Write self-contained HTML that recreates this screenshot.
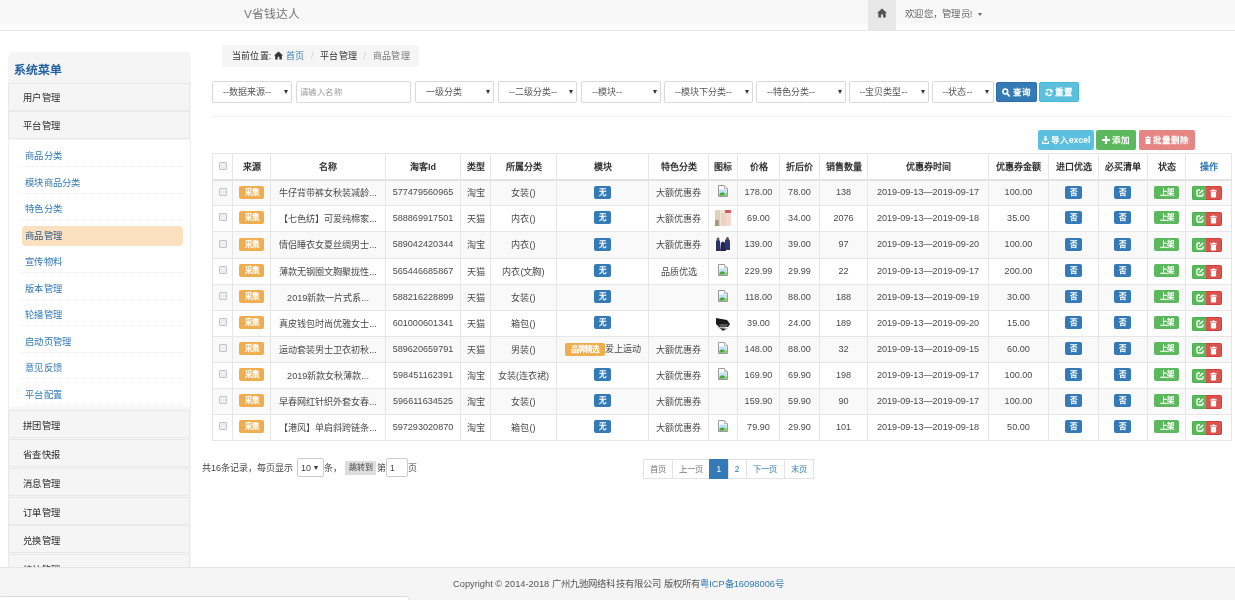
<!DOCTYPE html>
<html lang="zh-CN"><head><meta charset="utf-8">
<style>
*{box-sizing:border-box;margin:0;padding:0}
html,body{width:1235px;height:600px;overflow:hidden;background:#fff;}
#wrap{position:absolute;left:0;top:0;width:1235px;height:600px;will-change:transform;font-family:"Liberation Sans",sans-serif;color:#333}
.abs{position:absolute}
#hdr{left:0;top:0;width:1235px;height:31px;background:linear-gradient(#f8f8f8 0,#f8f8f8 24px,#fbfbfb 24px);border-bottom:1px solid #e7e7e7}
#brand{left:244px;top:5px;font-size:11.8px;color:#777;line-height:18px;white-space:nowrap}
#homebtn{left:868px;top:0;width:28px;height:30px;background:#e7e7e7}
#welcome{left:905px;top:7px;font-size:9.4px;letter-spacing:0.25px;color:#666;line-height:14px;white-space:nowrap}
.caret{display:inline-block;width:0;height:0;border-left:2.7px solid transparent;border-right:2.7px solid transparent;border-top:3.2px solid #666;vertical-align:middle;margin-left:5.5px}

#side{left:8px;top:52px;width:183px;height:560px;background:#f5f5f5;border-radius:5px}
#sidetitle{left:14px;top:63px;font-size:11.8px;font-weight:bold;color:#23629f;line-height:14px;white-space:nowrap}
.sitem{position:absolute;left:8px;width:182px;height:28px;background:#f5f5f5;border:1px solid #e8e8e8;font-size:9.3px;line-height:28px;padding-left:14px;color:#2a2a2a;letter-spacing:0.25px;white-space:nowrap}
#submenu{left:8px;top:140px;width:183px;height:267px;background:#fff;border-left:1px solid #eee;border-right:1px solid #eee}
.sub{position:absolute;left:20px;width:163px;height:24px;font-size:9.3px;letter-spacing:0.3px;line-height:26px;padding-left:5px;color:#337ab7;border-bottom:1px dotted #ececec;white-space:nowrap}
.sub.act{background:#fde0bf;color:#2a5a8c;border-radius:4px;left:22px;width:161px;height:20px;line-height:20px;padding-left:3px;border:none}

#crumb{left:222px;top:45px;width:197px;height:22px;background:#f5f5f5;border-radius:3px;font-size:9px;letter-spacing:0.2px;line-height:22px;padding-left:10px;white-space:nowrap;color:#333}
#crumb .sep{color:#ccc;padding:0 6.6px}
#crumb a{color:#337ab7}

.sel{position:absolute;top:81px;height:22px;border:1px solid #d9d9d9;border-radius:2px;background:#fff;font-size:9px;line-height:21px;padding-left:10px;color:#555;white-space:nowrap}
.sel .arr{position:absolute;right:3.5px;top:8px;width:0;height:0;border-left:2.5px solid transparent;border-right:2.5px solid transparent;border-top:4px solid #333}
.btn{position:absolute;border-radius:2px;color:#fff;font-size:8.5px;white-space:nowrap;display:flex;align-items:center;justify-content:center}
.bi{display:flex;align-items:center;gap:2.5px}.bi b{font-weight:bold;line-height:10px}.bi svg{display:block}

#hr{left:212px;top:113px;width:1019px;height:4px;border-bottom:1px solid #f4f4f4}

table{position:absolute;left:212px;top:153px;border-collapse:collapse;table-layout:fixed;font-size:9px;color:#333}
td,th{border:1px solid #e6e6e6;text-align:center;white-space:nowrap;overflow:hidden;padding:0}
th{height:26px;border-bottom:2px solid #e3e3e3;font-weight:bold;color:#333;padding-top:1px}
td{height:26px;color:#4a4a4a;font-size:9.1px;padding-bottom:1.5px}
tr.odd td{background:#f9f9f9}
.cb{display:inline-block;width:8px;height:8px;border:1px solid #c4c4c4;border-radius:1px;background:#eee;vertical-align:middle;position:relative;top:-1px}
.lbl{display:inline-block;height:13px;line-height:13px;border-radius:2px;color:#fff;font-size:7.5px;font-weight:bold;vertical-align:middle}
.lw{background:#f0ad4e;width:25px}
.lb{background:#337ab7;width:17px}
.lf{background:#337ab7;width:17px;position:relative;left:-0.5px}
.lg{background:#5cb85c;width:25px}
.ops{display:inline-block;height:14px;vertical-align:middle;font-size:0;position:relative;left:-1.5px;top:0.8px}
.ops>span{display:inline-block;height:14px;vertical-align:top}

.pt{font-size:9px;line-height:14px;white-space:nowrap;color:#444}
#pager{left:642.5px;top:458.5px;width:171px;height:20px}
#pager span{position:absolute;top:0;height:20px;line-height:18px;border:1px solid #e3e3e3;font-size:8.4px;color:#337ab7;text-align:center;background:#fff;white-space:nowrap}

#footer{left:0;top:567px;width:1235px;height:34px;background:#f5f5f5;border-top:1px solid #e5e5e5;font-size:9.3px;color:#555;white-space:nowrap}
#bottombox{left:-2px;top:596px;width:412px;height:10px;background:#fff;border:1px solid #ddd;border-radius:4px}
</style></head>
<body><div id="wrap">
<div id="hdr" class="abs"></div>
<div id="brand" class="abs">V省钱达人</div>
<div id="homebtn" class="abs"></div><svg width="10" height="10" viewBox="0 0 10 10" style="position:absolute;left:877px;top:8px"><path d="M5 0.5 L0 5 L1.3 5 L1.3 9.5 L4 9.5 L4 6.5 L6 6.5 L6 9.5 L8.7 9.5 L8.7 5 L10 5 Z" fill="#555"/></svg>
<div id="welcome" class="abs">欢迎您，管理员!<span class="caret"></span></div>

<div id="side" class="abs"></div>
<div id="sidetitle" class="abs">系统菜单</div>
<div class="sitem" style="top:83px">用户管理</div>
<div class="sitem" style="top:111px">平台管理</div>
<div id="submenu" class="abs"></div>
<div class="sub" style="top:143.0px">商品分类</div>
<div class="sub" style="top:169.6px">模块商品分类</div>
<div class="sub" style="top:196.1px">特色分类</div>
<div class="sub act" style="top:225.7px">商品管理</div>
<div class="sub" style="top:249.2px">宣传物料</div>
<div class="sub" style="top:275.8px">版本管理</div>
<div class="sub" style="top:302.3px">轮播管理</div>
<div class="sub" style="top:328.9px">启动页管理</div>
<div class="sub" style="top:355.4px">意见反馈</div>
<div class="sub" style="top:382.0px">平台配置</div>
<div class="sitem" style="top:410.2px;line-height:30px">拼团管理</div>
<div class="sitem" style="top:439.0px;line-height:30px">省查快报</div>
<div class="sitem" style="top:467.8px;line-height:30px">消息管理</div>
<div class="sitem" style="top:496.6px;line-height:30px">订单管理</div>
<div class="sitem" style="top:525.4px;line-height:30px">兑换管理</div>
<div class="sitem" style="top:554.2px;line-height:30px">统计管理</div>

<div id="crumb" class="abs">当前位置: <svg width="9" height="9" viewBox="0 0 10 10" style="vertical-align:-1px"><path d="M5 0.5 L0 5 L1.3 5 L1.3 9.5 L4 9.5 L4 6.5 L6 6.5 L6 9.5 L8.7 9.5 L8.7 5 L10 5 Z" fill="#333"/></svg> <a>首页</a><span class="sep">/</span>平台管理<span class="sep">/</span><span style="color:#777">商品管理</span></div>

<div id="hr" class="abs"></div>
<div class="sel" style="left:212px;width:80px">--数据来源--<i class="arr"></i></div>
<div class="sel" style="left:415px;width:79px">一级分类<i class="arr"></i></div>
<div class="sel" style="left:498px;width:79px">--二级分类--<i class="arr"></i></div>
<div class="sel" style="left:581px;width:80px">--模块--<i class="arr"></i></div>
<div class="sel" style="left:664px;width:89px">--模块下分类--<i class="arr"></i></div>
<div class="sel" style="left:756px;width:90px">--特色分类--<i class="arr"></i></div>
<div class="sel" style="left:848.5px;width:80.5px">--宝贝类型--<i class="arr"></i></div>
<div class="sel" style="left:931.5px;width:62px">--状态--<i class="arr"></i></div>
<div class="sel" style="left:296px;width:115px;color:#999;padding-left:2.5px;font-size:8.4px;letter-spacing:0.5px">请输入名称</div>
<div class="btn" style="left:996px;top:82px;width:41px;height:20px;background:#337ab7;border:1px solid #2e6da4"><span class="bi"><svg width="8" height="9" viewBox="0 0 8 9"><circle cx="3.3" cy="3.5" r="2.4" fill="none" stroke="#fff" stroke-width="1.5"/><path d="M4.8 5.2 L7.2 7.8" stroke="#fff" stroke-width="1.8" stroke-linecap="round"/></svg><b>查询</b></span></div>
<div class="btn" style="left:1039px;top:82px;width:40px;height:20px;background:#5bc0de;border:1px solid #46b8da"><span class="bi"><svg width="8" height="9" viewBox="0 0 8 9"><path d="M6.6 3.6 A2.9 2.9 0 0 0 1.3 3.0" fill="none" stroke="#fff" stroke-width="1.5"/><path d="M1.4 5.4 A2.9 2.9 0 0 0 6.7 6.0" fill="none" stroke="#fff" stroke-width="1.5"/><path d="M7.6 1.2 L7.6 4.4 L4.6 4.4 Z" fill="#fff"/><path d="M0.4 7.8 L0.4 4.6 L3.4 4.6 Z" fill="#fff"/></svg><b>重置</b></span></div>
<div class="btn" style="left:1038px;top:130px;width:56px;height:20px;background:#5bc0de"><span class="bi"><svg width="7" height="8" viewBox="0 0 7 8"><path d="M2.5 0 L4.5 0 L4.5 3 L6 3 L3.5 5.3 L1 3 L2.5 3 Z" fill="#fff"/><path d="M0 5 L1 5 L1 6.8 L6 6.8 L6 5 L7 5 L7 8 L0 8 Z" fill="#fff"/></svg><b>导入excel</b></span></div>
<div class="btn" style="left:1096px;top:130px;width:40px;height:20px;background:#5cb85c"><span class="bi"><svg width="8" height="8" viewBox="0 0 8 8"><path d="M2.9 0 H5.1 V2.9 H8 V5.1 H5.1 V8 H2.9 V5.1 H0 V2.9 H2.9 Z" fill="#fff"/></svg><b>添加</b></span></div>
<div class="btn" style="left:1139px;top:130px;width:56px;height:20px;background:#e58684"><span class="bi"><svg width="6" height="8" viewBox="0 0 6 8"><path d="M0 1 H2 V0.2 H4 V1 H6 V2 H0 Z" fill="#fff"/><path d="M0.6 2.5 H5.4 V8 H0.6 Z" fill="#fff"/></svg><b>批量删除</b></span></div>
<table><colgroup><col style="width:20px"><col style="width:38px"><col style="width:115px"><col style="width:75px"><col style="width:30px"><col style="width:66px"><col style="width:92px"><col style="width:60px"><col style="width:29px"><col style="width:42px"><col style="width:40px"><col style="width:48px"><col style="width:121px"><col style="width:60px"><col style="width:50px"><col style="width:49px"><col style="width:38px"><col style="width:46px"></colgroup>
<tr><th><span class="cb"></span></th><th>来源</th><th>名称</th><th>淘客Id</th><th>类型</th><th>所属分类</th><th>模块</th><th>特色分类</th><th>图标</th><th>价格</th><th>折后价</th><th>销售数量</th><th>优惠券时间</th><th>优惠券金额</th><th>进口优选</th><th>必买清单</th><th>状态</th><th><span style="color:#337ab7">操作</span></th></tr>
<tr class="odd"><td><span class="cb"></span></td><td><span class="lbl lw">采集</span></td><td>牛仔背带裤女秋装减龄...</td><td>577479560965</td><td>淘宝</td><td>女装()</td><td><span class="lbl lb">无</span></td><td>大额优惠券</td><td><svg width="12" height="12" viewBox="0 0 12 12" style="display:inline-block;vertical-align:middle;position:relative;left:0;top:-1px"><path d="M1.5 0.5 H7.5 L10.5 3.5 V11.5 H1.5 Z" fill="#fff" stroke="#9a9a9a" stroke-width="1"/><path d="M7.5 0.5 V3.5 H10.5" fill="#eee" stroke="#aaa" stroke-width="0.8"/><path d="M2.3 4.5 H9.7 V8 H2.3 Z" fill="#bfe0f5"/><path d="M2.3 10.8 L2.3 8.8 L5 7.3 L9.7 9 L9.7 10.8 Z" fill="#4aa34a"/><path d="M5.5 10.8 L9.7 7.5 L9.7 10.8 Z" fill="#8fd46c"/></svg></td><td>178.00</td><td>78.00</td><td>138</td><td>2019-09-13—2019-09-17</td><td>100.00</td><td><span class="lbl lf">否</span></td><td><span class="lbl lf">否</span></td><td><span class="lbl lg">上架</span></td><td><span class="ops"><span style="width:14.3px;background:#5cb85c;border:1px solid #4cae4c;border-right:none;border-radius:2px 0 0 2px"><svg width="8" height="8" viewBox="0 0 8 8" style="margin:2.5px 0 0 3.5px;display:block"><path d="M4 1 H2.2 Q1 1 1 2.2 V5.8 Q1 7 2.2 7 H5.8 Q7 7 7 5.8 V4.2" fill="none" stroke="#fff" stroke-width="1.3"/><path d="M3.2 5 L3.4 3.6 L6.6 0.4 L7.6 1.4 L4.4 4.6 Z" fill="#fff"/></svg></span><span style="width:16.2px;background:#d9534f;border:1px solid #d43f3a;border-left:none;border-radius:0 2px 2px 0"><svg width="7" height="9" viewBox="0 0 7 9" style="margin:2.5px 0 0 4px;display:block"><path d="M0.3 1.3 H2.3 Q2.5 0.2 3.5 0.2 Q4.5 0.2 4.7 1.3 H6.7 V2.4 H0.3 Z" fill="#fff"/><path d="M0.9 2.9 H6.1 V7.8 Q6.1 8.6 5.3 8.6 H1.7 Q0.9 8.6 0.9 7.8 Z" fill="#fff"/></svg></span></span></td></tr>
<tr><td><span class="cb"></span></td><td><span class="lbl lw">采集</span></td><td>【七色纺】可爱纯棉家...</td><td>588869917501</td><td>天猫</td><td>内衣()</td><td><span class="lbl lb">无</span></td><td>大额优惠券</td><td><svg width="16" height="16" viewBox="0 0 16 16" style="display:inline-block;vertical-align:middle"><rect width="16" height="16" fill="#efe3d2"/><rect x="0" y="0" width="5" height="16" fill="#ddd2bc"/><rect x="6" y="3" width="5" height="13" fill="#f0cfc4"/><rect x="10" y="0" width="6" height="3" fill="#d65a5a"/><rect x="11" y="3" width="5" height="13" fill="#f3d9d0"/><rect x="0" y="10" width="4" height="6" fill="#a99a7c"/></svg></td><td>69.00</td><td>34.00</td><td>2076</td><td>2019-09-13—2019-09-18</td><td>35.00</td><td><span class="lbl lf">否</span></td><td><span class="lbl lf">否</span></td><td><span class="lbl lg">上架</span></td><td><span class="ops"><span style="width:14.3px;background:#5cb85c;border:1px solid #4cae4c;border-right:none;border-radius:2px 0 0 2px"><svg width="8" height="8" viewBox="0 0 8 8" style="margin:2.5px 0 0 3.5px;display:block"><path d="M4 1 H2.2 Q1 1 1 2.2 V5.8 Q1 7 2.2 7 H5.8 Q7 7 7 5.8 V4.2" fill="none" stroke="#fff" stroke-width="1.3"/><path d="M3.2 5 L3.4 3.6 L6.6 0.4 L7.6 1.4 L4.4 4.6 Z" fill="#fff"/></svg></span><span style="width:16.2px;background:#d9534f;border:1px solid #d43f3a;border-left:none;border-radius:0 2px 2px 0"><svg width="7" height="9" viewBox="0 0 7 9" style="margin:2.5px 0 0 4px;display:block"><path d="M0.3 1.3 H2.3 Q2.5 0.2 3.5 0.2 Q4.5 0.2 4.7 1.3 H6.7 V2.4 H0.3 Z" fill="#fff"/><path d="M0.9 2.9 H6.1 V7.8 Q6.1 8.6 5.3 8.6 H1.7 Q0.9 8.6 0.9 7.8 Z" fill="#fff"/></svg></span></span></td></tr>
<tr style="height:27px" class="odd"><td><span class="cb"></span></td><td><span class="lbl lw">采集</span></td><td>情侣睡衣女夏丝绸男士...</td><td>589042420344</td><td>淘宝</td><td>内衣()</td><td><span class="lbl lb">无</span></td><td>大额优惠券</td><td><svg width="16" height="16" viewBox="0 0 16 16" style="display:inline-block;vertical-align:middle"><rect width="16" height="16" fill="#fff"/><path d="M1 5 Q3 2 5 5 L6 15 L1 15 Z" fill="#2b3266"/><path d="M6 7 Q8 4 10 7 L11 15 L6 15 Z" fill="#1f2452"/><path d="M10 4 Q13 1 15 5 L15 14 L10 14 Z" fill="#2e3570"/><circle cx="3" cy="3" r="1.5" fill="#6b5548"/><circle cx="12.5" cy="2.5" r="1.5" fill="#6b5548"/></svg></td><td>139.00</td><td>39.00</td><td>97</td><td>2019-09-13—2019-09-20</td><td>100.00</td><td><span class="lbl lf">否</span></td><td><span class="lbl lf">否</span></td><td><span class="lbl lg">上架</span></td><td><span class="ops"><span style="width:14.3px;background:#5cb85c;border:1px solid #4cae4c;border-right:none;border-radius:2px 0 0 2px"><svg width="8" height="8" viewBox="0 0 8 8" style="margin:2.5px 0 0 3.5px;display:block"><path d="M4 1 H2.2 Q1 1 1 2.2 V5.8 Q1 7 2.2 7 H5.8 Q7 7 7 5.8 V4.2" fill="none" stroke="#fff" stroke-width="1.3"/><path d="M3.2 5 L3.4 3.6 L6.6 0.4 L7.6 1.4 L4.4 4.6 Z" fill="#fff"/></svg></span><span style="width:16.2px;background:#d9534f;border:1px solid #d43f3a;border-left:none;border-radius:0 2px 2px 0"><svg width="7" height="9" viewBox="0 0 7 9" style="margin:2.5px 0 0 4px;display:block"><path d="M0.3 1.3 H2.3 Q2.5 0.2 3.5 0.2 Q4.5 0.2 4.7 1.3 H6.7 V2.4 H0.3 Z" fill="#fff"/><path d="M0.9 2.9 H6.1 V7.8 Q6.1 8.6 5.3 8.6 H1.7 Q0.9 8.6 0.9 7.8 Z" fill="#fff"/></svg></span></span></td></tr>
<tr><td><span class="cb"></span></td><td><span class="lbl lw">采集</span></td><td>薄款无钢圈文胸聚拢性...</td><td>565446685867</td><td>天猫</td><td>内衣(文胸)</td><td><span class="lbl lb">无</span></td><td>品质优选</td><td><svg width="12" height="12" viewBox="0 0 12 12" style="display:inline-block;vertical-align:middle;position:relative;left:0;top:-1px"><path d="M1.5 0.5 H7.5 L10.5 3.5 V11.5 H1.5 Z" fill="#fff" stroke="#9a9a9a" stroke-width="1"/><path d="M7.5 0.5 V3.5 H10.5" fill="#eee" stroke="#aaa" stroke-width="0.8"/><path d="M2.3 4.5 H9.7 V8 H2.3 Z" fill="#bfe0f5"/><path d="M2.3 10.8 L2.3 8.8 L5 7.3 L9.7 9 L9.7 10.8 Z" fill="#4aa34a"/><path d="M5.5 10.8 L9.7 7.5 L9.7 10.8 Z" fill="#8fd46c"/></svg></td><td>229.99</td><td>29.99</td><td>22</td><td>2019-09-13—2019-09-17</td><td>200.00</td><td><span class="lbl lf">否</span></td><td><span class="lbl lf">否</span></td><td><span class="lbl lg">上架</span></td><td><span class="ops"><span style="width:14.3px;background:#5cb85c;border:1px solid #4cae4c;border-right:none;border-radius:2px 0 0 2px"><svg width="8" height="8" viewBox="0 0 8 8" style="margin:2.5px 0 0 3.5px;display:block"><path d="M4 1 H2.2 Q1 1 1 2.2 V5.8 Q1 7 2.2 7 H5.8 Q7 7 7 5.8 V4.2" fill="none" stroke="#fff" stroke-width="1.3"/><path d="M3.2 5 L3.4 3.6 L6.6 0.4 L7.6 1.4 L4.4 4.6 Z" fill="#fff"/></svg></span><span style="width:16.2px;background:#d9534f;border:1px solid #d43f3a;border-left:none;border-radius:0 2px 2px 0"><svg width="7" height="9" viewBox="0 0 7 9" style="margin:2.5px 0 0 4px;display:block"><path d="M0.3 1.3 H2.3 Q2.5 0.2 3.5 0.2 Q4.5 0.2 4.7 1.3 H6.7 V2.4 H0.3 Z" fill="#fff"/><path d="M0.9 2.9 H6.1 V7.8 Q6.1 8.6 5.3 8.6 H1.7 Q0.9 8.6 0.9 7.8 Z" fill="#fff"/></svg></span></span></td></tr>
<tr class="odd"><td><span class="cb"></span></td><td><span class="lbl lw">采集</span></td><td>2019新款一片式系...</td><td>588216228899</td><td>天猫</td><td>女装()</td><td><span class="lbl lb">无</span></td><td></td><td><svg width="12" height="12" viewBox="0 0 12 12" style="display:inline-block;vertical-align:middle;position:relative;left:0;top:-1px"><path d="M1.5 0.5 H7.5 L10.5 3.5 V11.5 H1.5 Z" fill="#fff" stroke="#9a9a9a" stroke-width="1"/><path d="M7.5 0.5 V3.5 H10.5" fill="#eee" stroke="#aaa" stroke-width="0.8"/><path d="M2.3 4.5 H9.7 V8 H2.3 Z" fill="#bfe0f5"/><path d="M2.3 10.8 L2.3 8.8 L5 7.3 L9.7 9 L9.7 10.8 Z" fill="#4aa34a"/><path d="M5.5 10.8 L9.7 7.5 L9.7 10.8 Z" fill="#8fd46c"/></svg></td><td>118.00</td><td>88.00</td><td>188</td><td>2019-09-13—2019-09-19</td><td>30.00</td><td><span class="lbl lf">否</span></td><td><span class="lbl lf">否</span></td><td><span class="lbl lg">上架</span></td><td><span class="ops"><span style="width:14.3px;background:#5cb85c;border:1px solid #4cae4c;border-right:none;border-radius:2px 0 0 2px"><svg width="8" height="8" viewBox="0 0 8 8" style="margin:2.5px 0 0 3.5px;display:block"><path d="M4 1 H2.2 Q1 1 1 2.2 V5.8 Q1 7 2.2 7 H5.8 Q7 7 7 5.8 V4.2" fill="none" stroke="#fff" stroke-width="1.3"/><path d="M3.2 5 L3.4 3.6 L6.6 0.4 L7.6 1.4 L4.4 4.6 Z" fill="#fff"/></svg></span><span style="width:16.2px;background:#d9534f;border:1px solid #d43f3a;border-left:none;border-radius:0 2px 2px 0"><svg width="7" height="9" viewBox="0 0 7 9" style="margin:2.5px 0 0 4px;display:block"><path d="M0.3 1.3 H2.3 Q2.5 0.2 3.5 0.2 Q4.5 0.2 4.7 1.3 H6.7 V2.4 H0.3 Z" fill="#fff"/><path d="M0.9 2.9 H6.1 V7.8 Q6.1 8.6 5.3 8.6 H1.7 Q0.9 8.6 0.9 7.8 Z" fill="#fff"/></svg></span></span></td></tr>
<tr><td><span class="cb"></span></td><td><span class="lbl lw">采集</span></td><td>真皮钱包时尚优雅女士...</td><td>601000601341</td><td>天猫</td><td>箱包()</td><td><span class="lbl lb">无</span></td><td></td><td><svg width="16" height="16" viewBox="0 0 16 16" style="display:inline-block;vertical-align:middle"><rect width="16" height="16" fill="#fff"/><path d="M1 3 L12 5 L15 9 L13 12 L4 12 L1 9 Z" fill="#1b1b1b"/><path d="M4 9 L13 9 L12 12 L5 12 Z" fill="#555"/><path d="M2 12 L7 15 L14 14 L9 12 Z" fill="#c9b6a4"/><path d="M5 13 L8 16 L11 14 Z" fill="#222"/></svg></td><td>39.00</td><td>24.00</td><td>189</td><td>2019-09-13—2019-09-20</td><td>15.00</td><td><span class="lbl lf">否</span></td><td><span class="lbl lf">否</span></td><td><span class="lbl lg">上架</span></td><td><span class="ops"><span style="width:14.3px;background:#5cb85c;border:1px solid #4cae4c;border-right:none;border-radius:2px 0 0 2px"><svg width="8" height="8" viewBox="0 0 8 8" style="margin:2.5px 0 0 3.5px;display:block"><path d="M4 1 H2.2 Q1 1 1 2.2 V5.8 Q1 7 2.2 7 H5.8 Q7 7 7 5.8 V4.2" fill="none" stroke="#fff" stroke-width="1.3"/><path d="M3.2 5 L3.4 3.6 L6.6 0.4 L7.6 1.4 L4.4 4.6 Z" fill="#fff"/></svg></span><span style="width:16.2px;background:#d9534f;border:1px solid #d43f3a;border-left:none;border-radius:0 2px 2px 0"><svg width="7" height="9" viewBox="0 0 7 9" style="margin:2.5px 0 0 4px;display:block"><path d="M0.3 1.3 H2.3 Q2.5 0.2 3.5 0.2 Q4.5 0.2 4.7 1.3 H6.7 V2.4 H0.3 Z" fill="#fff"/><path d="M0.9 2.9 H6.1 V7.8 Q6.1 8.6 5.3 8.6 H1.7 Q0.9 8.6 0.9 7.8 Z" fill="#fff"/></svg></span></span></td></tr>
<tr class="odd"><td><span class="cb"></span></td><td><span class="lbl lw">采集</span></td><td>运动套装男士卫衣初秋...</td><td>589620659791</td><td>天猫</td><td>男装()</td><td><span class="lbl lw" style="width:40px">品牌精选</span>爱上运动</td><td>大额优惠券</td><td><svg width="12" height="12" viewBox="0 0 12 12" style="display:inline-block;vertical-align:middle;position:relative;left:0;top:-1px"><path d="M1.5 0.5 H7.5 L10.5 3.5 V11.5 H1.5 Z" fill="#fff" stroke="#9a9a9a" stroke-width="1"/><path d="M7.5 0.5 V3.5 H10.5" fill="#eee" stroke="#aaa" stroke-width="0.8"/><path d="M2.3 4.5 H9.7 V8 H2.3 Z" fill="#bfe0f5"/><path d="M2.3 10.8 L2.3 8.8 L5 7.3 L9.7 9 L9.7 10.8 Z" fill="#4aa34a"/><path d="M5.5 10.8 L9.7 7.5 L9.7 10.8 Z" fill="#8fd46c"/></svg></td><td>148.00</td><td>88.00</td><td>32</td><td>2019-09-13—2019-09-15</td><td>60.00</td><td><span class="lbl lf">否</span></td><td><span class="lbl lf">否</span></td><td><span class="lbl lg">上架</span></td><td><span class="ops"><span style="width:14.3px;background:#5cb85c;border:1px solid #4cae4c;border-right:none;border-radius:2px 0 0 2px"><svg width="8" height="8" viewBox="0 0 8 8" style="margin:2.5px 0 0 3.5px;display:block"><path d="M4 1 H2.2 Q1 1 1 2.2 V5.8 Q1 7 2.2 7 H5.8 Q7 7 7 5.8 V4.2" fill="none" stroke="#fff" stroke-width="1.3"/><path d="M3.2 5 L3.4 3.6 L6.6 0.4 L7.6 1.4 L4.4 4.6 Z" fill="#fff"/></svg></span><span style="width:16.2px;background:#d9534f;border:1px solid #d43f3a;border-left:none;border-radius:0 2px 2px 0"><svg width="7" height="9" viewBox="0 0 7 9" style="margin:2.5px 0 0 4px;display:block"><path d="M0.3 1.3 H2.3 Q2.5 0.2 3.5 0.2 Q4.5 0.2 4.7 1.3 H6.7 V2.4 H0.3 Z" fill="#fff"/><path d="M0.9 2.9 H6.1 V7.8 Q6.1 8.6 5.3 8.6 H1.7 Q0.9 8.6 0.9 7.8 Z" fill="#fff"/></svg></span></span></td></tr>
<tr><td><span class="cb"></span></td><td><span class="lbl lw">采集</span></td><td>2019新款女秋薄款...</td><td>598451162391</td><td>淘宝</td><td>女装(连衣裙)</td><td><span class="lbl lb">无</span></td><td>大额优惠券</td><td><svg width="12" height="12" viewBox="0 0 12 12" style="display:inline-block;vertical-align:middle;position:relative;left:0;top:-1px"><path d="M1.5 0.5 H7.5 L10.5 3.5 V11.5 H1.5 Z" fill="#fff" stroke="#9a9a9a" stroke-width="1"/><path d="M7.5 0.5 V3.5 H10.5" fill="#eee" stroke="#aaa" stroke-width="0.8"/><path d="M2.3 4.5 H9.7 V8 H2.3 Z" fill="#bfe0f5"/><path d="M2.3 10.8 L2.3 8.8 L5 7.3 L9.7 9 L9.7 10.8 Z" fill="#4aa34a"/><path d="M5.5 10.8 L9.7 7.5 L9.7 10.8 Z" fill="#8fd46c"/></svg></td><td>169.90</td><td>69.90</td><td>198</td><td>2019-09-13—2019-09-17</td><td>100.00</td><td><span class="lbl lf">否</span></td><td><span class="lbl lf">否</span></td><td><span class="lbl lg">上架</span></td><td><span class="ops"><span style="width:14.3px;background:#5cb85c;border:1px solid #4cae4c;border-right:none;border-radius:2px 0 0 2px"><svg width="8" height="8" viewBox="0 0 8 8" style="margin:2.5px 0 0 3.5px;display:block"><path d="M4 1 H2.2 Q1 1 1 2.2 V5.8 Q1 7 2.2 7 H5.8 Q7 7 7 5.8 V4.2" fill="none" stroke="#fff" stroke-width="1.3"/><path d="M3.2 5 L3.4 3.6 L6.6 0.4 L7.6 1.4 L4.4 4.6 Z" fill="#fff"/></svg></span><span style="width:16.2px;background:#d9534f;border:1px solid #d43f3a;border-left:none;border-radius:0 2px 2px 0"><svg width="7" height="9" viewBox="0 0 7 9" style="margin:2.5px 0 0 4px;display:block"><path d="M0.3 1.3 H2.3 Q2.5 0.2 3.5 0.2 Q4.5 0.2 4.7 1.3 H6.7 V2.4 H0.3 Z" fill="#fff"/><path d="M0.9 2.9 H6.1 V7.8 Q6.1 8.6 5.3 8.6 H1.7 Q0.9 8.6 0.9 7.8 Z" fill="#fff"/></svg></span></span></td></tr>
<tr class="odd"><td><span class="cb"></span></td><td><span class="lbl lw">采集</span></td><td>早春网红针织外套女春...</td><td>596611634525</td><td>淘宝</td><td>女装()</td><td><span class="lbl lb">无</span></td><td>大额优惠券</td><td></td><td>159.90</td><td>59.90</td><td>90</td><td>2019-09-13—2019-09-17</td><td>100.00</td><td><span class="lbl lf">否</span></td><td><span class="lbl lf">否</span></td><td><span class="lbl lg">上架</span></td><td><span class="ops"><span style="width:14.3px;background:#5cb85c;border:1px solid #4cae4c;border-right:none;border-radius:2px 0 0 2px"><svg width="8" height="8" viewBox="0 0 8 8" style="margin:2.5px 0 0 3.5px;display:block"><path d="M4 1 H2.2 Q1 1 1 2.2 V5.8 Q1 7 2.2 7 H5.8 Q7 7 7 5.8 V4.2" fill="none" stroke="#fff" stroke-width="1.3"/><path d="M3.2 5 L3.4 3.6 L6.6 0.4 L7.6 1.4 L4.4 4.6 Z" fill="#fff"/></svg></span><span style="width:16.2px;background:#d9534f;border:1px solid #d43f3a;border-left:none;border-radius:0 2px 2px 0"><svg width="7" height="9" viewBox="0 0 7 9" style="margin:2.5px 0 0 4px;display:block"><path d="M0.3 1.3 H2.3 Q2.5 0.2 3.5 0.2 Q4.5 0.2 4.7 1.3 H6.7 V2.4 H0.3 Z" fill="#fff"/><path d="M0.9 2.9 H6.1 V7.8 Q6.1 8.6 5.3 8.6 H1.7 Q0.9 8.6 0.9 7.8 Z" fill="#fff"/></svg></span></span></td></tr>
<tr><td><span class="cb"></span></td><td><span class="lbl lw">采集</span></td><td>【港风】单肩斜跨链条...</td><td>597293020870</td><td>淘宝</td><td>箱包()</td><td><span class="lbl lb">无</span></td><td>大额优惠券</td><td><svg width="12" height="12" viewBox="0 0 12 12" style="display:inline-block;vertical-align:middle;position:relative;left:0;top:-1px"><path d="M1.5 0.5 H7.5 L10.5 3.5 V11.5 H1.5 Z" fill="#fff" stroke="#9a9a9a" stroke-width="1"/><path d="M7.5 0.5 V3.5 H10.5" fill="#eee" stroke="#aaa" stroke-width="0.8"/><path d="M2.3 4.5 H9.7 V8 H2.3 Z" fill="#bfe0f5"/><path d="M2.3 10.8 L2.3 8.8 L5 7.3 L9.7 9 L9.7 10.8 Z" fill="#4aa34a"/><path d="M5.5 10.8 L9.7 7.5 L9.7 10.8 Z" fill="#8fd46c"/></svg></td><td>79.90</td><td>29.90</td><td>101</td><td>2019-09-13—2019-09-18</td><td>50.00</td><td><span class="lbl lf">否</span></td><td><span class="lbl lf">否</span></td><td><span class="lbl lg">上架</span></td><td><span class="ops"><span style="width:14.3px;background:#5cb85c;border:1px solid #4cae4c;border-right:none;border-radius:2px 0 0 2px"><svg width="8" height="8" viewBox="0 0 8 8" style="margin:2.5px 0 0 3.5px;display:block"><path d="M4 1 H2.2 Q1 1 1 2.2 V5.8 Q1 7 2.2 7 H5.8 Q7 7 7 5.8 V4.2" fill="none" stroke="#fff" stroke-width="1.3"/><path d="M3.2 5 L3.4 3.6 L6.6 0.4 L7.6 1.4 L4.4 4.6 Z" fill="#fff"/></svg></span><span style="width:16.2px;background:#d9534f;border:1px solid #d43f3a;border-left:none;border-radius:0 2px 2px 0"><svg width="7" height="9" viewBox="0 0 7 9" style="margin:2.5px 0 0 4px;display:block"><path d="M0.3 1.3 H2.3 Q2.5 0.2 3.5 0.2 Q4.5 0.2 4.7 1.3 H6.7 V2.4 H0.3 Z" fill="#fff"/><path d="M0.9 2.9 H6.1 V7.8 Q6.1 8.6 5.3 8.6 H1.7 Q0.9 8.6 0.9 7.8 Z" fill="#fff"/></svg></span></span></td></tr>
</table>
<div class="abs pt" style="left:202px;top:461px">共16条记录，每页显示</div>
<div class="abs" style="left:297px;top:458px;width:27px;height:19px;border:1px solid #ccc;border-radius:2px;background:#fff"></div>
<div class="abs pt" style="left:301px;top:461px">10</div>
<div class="abs" style="left:314px;top:466px;width:0;height:0;border-left:2.5px solid transparent;border-right:2.5px solid transparent;border-top:4px solid #333"></div>
<div class="abs pt" style="left:324px;top:461px">条，</div>
<div class="abs pt" style="left:345px;top:461px;width:31px;height:14px;background:#ddd;color:#444;font-size:8px;text-align:center">跳转到</div>
<div class="abs pt" style="left:377px;top:461px">第</div>
<div class="abs" style="left:386px;top:458px;width:22px;height:19px;border:1px solid #ccc;border-radius:2px;background:#fff"></div>
<div class="abs pt" style="left:390px;top:461px;font-size:8.5px">1</div>
<div class="abs pt" style="left:408px;top:461px">页</div>
<div id="pager" class="abs"><span style="left:0;width:30px;color:#777">首页</span><span style="left:29px;width:38.5px;color:#777">上一页</span><span style="left:66.5px;width:19.5px;background:#337ab7;border-color:#337ab7;color:#fff">1</span><span style="left:85px;width:19px">2</span><span style="left:103px;width:39px">下一页</span><span style="left:141px;width:30px">末页</span></div>
<div id="footer" class="abs"><div style="position:absolute;left:453px;top:9px;line-height:14px">Copyright © 2014-2018 <span style="letter-spacing:0.1px">广州九驰网络科技有限公司 版权所有</span><span style="color:#337ab7">粤ICP备16098006号</span></div></div>
<div id="bottombox" class="abs"></div>
</div></body></html>
